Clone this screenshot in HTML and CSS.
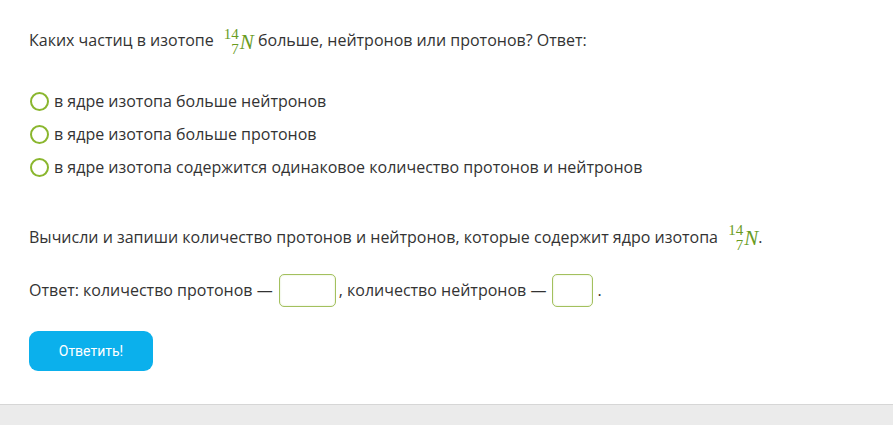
FILE: index.html
```html
<!DOCTYPE html>
<html lang="ru">
<head>
    <meta charset="UTF-8">
    <title>Изотоп азота</title>
    <link rel="stylesheet" href="styles.css">
</head>
<body>
    <div class="task">
        <p class="question">Каких частиц в изотопе <span class="nuclide"><span class="idx"><span class="up">14</span><span class="down">7</span></span><span class="sym">N</span></span> больше, нейтронов или протонов? Ответ:</p>

        <ul class="options">
            <li><span class="radio"></span>в ядре изотопа больше нейтронов</li>
            <li><span class="radio"></span>в ядре изотопа больше протонов</li>
            <li><span class="radio"></span>в ядре изотопа содержится одинаковое количество протонов и нейтронов</li>
        </ul>

        <p class="question second">Вычисли и запиши количество протонов и нейтронов, которые содержит ядро изотопа <span class="nuclide"><span class="idx"><span class="up">14</span><span class="down">7</span></span><span class="sym">N</span></span>.</p>

        <p class="answer">Ответ: количество протонов —<input type="text" class="box wide">, количество нейтронов —<input type="text" class="box narrow">.</p>

        <button class="submit">Ответить!</button>
    </div>
    <div class="footer"></div>
</body>
</html>
```

FILE: styles.css
```css
body {
    margin: 0;
    font-family: "Open Sans", sans-serif;
    font-size: 16px;
    color: #333;
    background-color: #fff;
}
.task {
    padding: 24px 29px 33px;
}
.question {
    margin: 0;
    line-height: 32px;
}
.second {
    margin-top: 37px;
}
.nuclide {
    display: inline-flex;
    align-items: center;
    margin-left: 6px;
    color: #6a9c1f;
    font-family: "Liberation Serif", "DejaVu Serif", serif;
    vertical-align: middle;
}
.idx {
    display: inline-flex;
    flex-direction: column;
    align-items: flex-end;
    font-size: 15px;
    line-height: 15px;
    margin-right: 1px;
}
.up, .down {
    display: block;
    height: 15px;
}
.sym {
    font-style: italic;
    font-size: 21px;
    line-height: 24px;
}
.options {
    list-style: none;
    margin: 28px 0 0;
    padding: 0;
}
.options li {
    display: flex;
    align-items: center;
    height: 33px;
}
.radio {
    width: 15px;
    height: 15px;
    border: 2px solid #8ab62e;
    border-radius: 50%;
    margin: 0 5px 0 1px;
}
.answer {
    margin: 20px 0 0;
    display: flex;
    align-items: center;
    white-space: pre;
    line-height: 34px;
}
.box {
    box-sizing: border-box;
    height: 33px;
    margin: 0 3px 0 6px;
    border: 1px solid #a3c05e;
    border-radius: 5px;
    box-shadow: inset 0 0 2px #d9e6bd;
    background-color: #fff;
}
.wide {
    width: 57px;
}
.narrow {
    width: 41px;
    margin-right: 4px;
}
.submit {
    display: block;
    margin-top: 24px;
    width: 124px;
    height: 40px;
    border: none;
    border-radius: 9px;
    background-color: #0bb0ec;
    color: #fff;
    font-family: Roboto, sans-serif;
    font-size: 14px;
    cursor: pointer;
}
.footer {
    height: 20px;
    border-top: 1px solid #d6d6d6;
    background-color: #ebebeb;
}
```
